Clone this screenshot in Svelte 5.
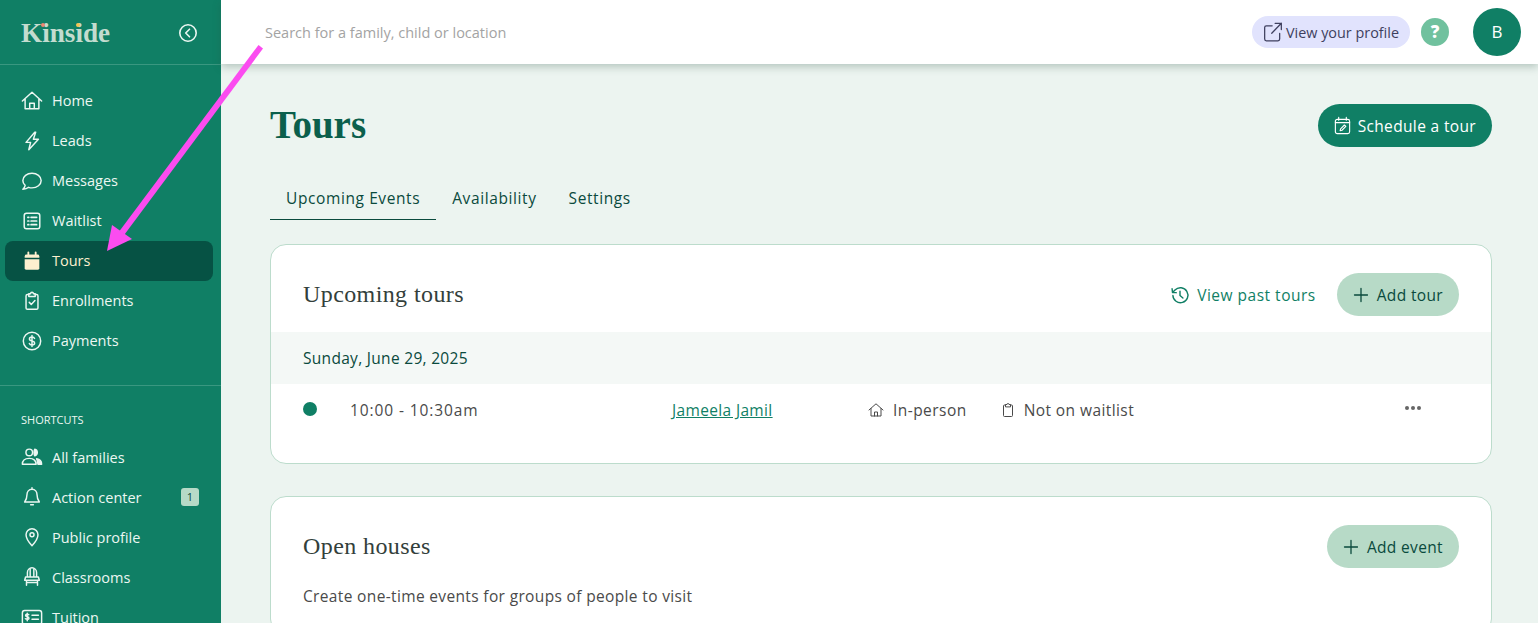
<script lang="ts">
  const mainNav = [
    { label: 'Home', icon: 'home' },
    { label: 'Leads', icon: 'bolt' },
    { label: 'Messages', icon: 'chat' },
    { label: 'Waitlist', icon: 'list' },
    { label: 'Tours', icon: 'calendar', active: true },
    { label: 'Enrollments', icon: 'clipboard' },
    { label: 'Payments', icon: 'dollar' }
  ];
  const shortcuts = [
    { label: 'All families', icon: 'people' },
    { label: 'Action center', icon: 'bell', badge: '1' },
    { label: 'Public profile', icon: 'pin' },
    { label: 'Classrooms', icon: 'chair' },
    { label: 'Tuition', icon: 'bill' }
  ];
</script>

{#snippet navIcon(name: string)}
  <svg class="nav-icon" viewBox="0 0 24 24" fill="none" stroke="currentColor" stroke-width="1.6" stroke-linecap="round" stroke-linejoin="round">
    {#if name === 'home'}
      <path d="M1.5 12 12 2.500 22.500 12M4.500 9.500v11h15v-11M9.500 20.500v-6h5v6" />
    {:else if name === 'bolt'}
      <path d="M15 2.500 5.500 13.500h5L8.500 21.500 19 10h-5.500l2.500-7.500Z" />
    {:else if name === 'chat'}
      <path d="M12 3.500c5.500 0 10 3.500 10 8s-4.500 8-10 8c-1.300 0-2.500-.2-3.700-.6C6.800 20.300 4.500 21 2 21c1.400-1.100 2.300-2.600 2.500-4.200C3 15.400 2 13.500 2 11.500c0-4.500 4.500-8 10-8Z" />
    {:else if name === 'list'}
      <rect x="3.500" y="3.500" width="17" height="17" rx="2.500" />
      <path d="M7.500 8h1M7.500 12h1M7.500 16h1M11 8h6M11 12h6M11 16h6" stroke-width="1.9" />
    {:else if name === 'calendar'}
      <path d="M4 8.500V7a2 2 0 0 1 2-2h12a2 2 0 0 1 2 2v1.500Z" fill="currentColor" stroke="none" />
      <path d="M4 10h16v10a1.500 1.500 0 0 1-1.500 1.500h-13A1.500 1.500 0 0 1 4 20Z" fill="currentColor" stroke="none" />
      <path d="M8 2.500V5M16 2.500V5" stroke-width="2" />
    {:else if name === 'clipboard'}
      <path d="M8.500 5H7a1.500 1.500 0 0 0-1.500 1.500v13A1.500 1.500 0 0 0 7 21h10a1.500 1.500 0 0 0 1.500-1.500v-13A1.500 1.500 0 0 0 17 5h-1.500" />
      <path d="M8.500 4h2a1.500 1.500 0 0 1 3 0h2v3h-7ZM9 13.500l2.200 2.200 4-4.200" />
    {:else if name === 'dollar'}
      <circle cx="12" cy="12" r="9.500" />
      <path d="M14.800 9.200c-.4-1-1.500-1.500-2.800-1.500-1.600 0-2.800.8-2.800 2.100 0 3 5.700 1.500 5.700 4.400 0 1.300-1.300 2.100-2.900 2.100-1.400 0-2.500-.6-2.900-1.600M12 6v12" />
    {:else if name === 'people'}
      <circle cx="9" cy="7" r="3.600" />
      <path d="M15 3.600a3.600 3.600 0 0 1 0 7c-1-1-1-6 0-7Z" fill="currentColor" />
      <path d="M1.500 20c0-4 3-6.500 7.500-6.500s7.500 2.500 7.500 6.500Z" />
      <path d="M17 14c3 .5 5.500 2.500 5.500 6h-4c0-2.500-.5-4.500-1.500-6Z" fill="currentColor" />
    {:else if name === 'bell'}
      <path d="M12 3.500c-3.500 0-5.500 2.800-5.500 6 0 4.500-1 6-2.500 8h16c-1.500-2-2.500-3.500-2.500-8 0-3.200-2-6-5.500-6ZM12 2v1.500M10.500 20.500h3" />
    {:else if name === 'pin'}
      <path d="M12 21.500S5.500 14.500 5.500 9.500a6.500 6.500 0 0 1 13 0c0 5-6.500 12-6.500 12Z" />
      <circle cx="12" cy="9.500" r="2.200" />
    {:else if name === 'chair'}
      <path d="M7 12V7a5 5 0 0 1 10 0v5M10 12V3.500M14 12V3.500M5 12h14l1 3.500H4ZM6 15.500V21M18 15.500V21M6 18h12" />
    {:else if name === 'bill'}
      <rect x="1.500" y="5" width="21" height="15" rx="2.500" />
      <path d="M8.500 9.500c-.5-.7-3.500-1-3.500.8 0 2 3.700 1 3.700 3 0 1.800-3.200 1.500-3.900.5M6.800 8v8M12 10h7M12 14.500h7" />
    {/if}
  </svg>
{/snippet}

<div class="app">
  <aside class="sidebar">
    <div class="brand">
      <span class="logo">Kinside<i class="dot red"></i><i class="dot yellow"></i></span>
      <svg class="collapse" viewBox="0 0 20 20" fill="none" stroke="currentColor" stroke-width="1.6" stroke-linecap="round" stroke-linejoin="round">
        <circle cx="10" cy="10" r="8.200" />
        <path d="M11.500 6.200 7.700 10l3.800 3.800" />
      </svg>
    </div>
    <nav class="nav">
      {#each mainNav as item (item.label)}
        <div class="nav-item" class:active={item.active}>
          {@render navIcon(item.icon)}
          <span class="raised">{item.label}</span>
        </div>
      {/each}
    </nav>
    <div class="section">
      <div class="section-label">SHORTCUTS</div>
      {#each shortcuts as item (item.label)}
        <div class="nav-item">
          {@render navIcon(item.icon)}
          <span>{item.label}</span>
          {#if item.badge}<b class="badge">{item.badge}</b>{/if}
        </div>
      {/each}
    </div>
  </aside>

  <div class="main">
    <header class="topbar">
      <span class="search">Search for a family, child or location</span>
      <div class="top-actions">
        <div class="profile-pill">
          <svg viewBox="0 0 24 24" fill="none" stroke="currentColor" stroke-width="1.5" stroke-linecap="round" stroke-linejoin="round">
            <path d="M11 4.500H4A2 2 0 0 0 2 6.500v14a2 2 0 0 0 2 2h14a2 2 0 0 0 2-2v-7M14.500 1.500H22v7.500M22 1.500 10.500 13.500" />
          </svg>
          View your profile
        </div>
        <div class="help">?</div>
        <div class="avatar">B</div>
      </div>
    </header>

    <main class="content">
      <div class="page-head">
        <h1>Tours</h1>
        <div class="btn primary">
          <svg viewBox="0 0 20 20" fill="none" stroke="currentColor" stroke-width="1.2" stroke-linecap="round" stroke-linejoin="round">
            <rect x="2.500" y="3.500" width="15" height="15" rx="2" />
            <path d="M2.500 7h15M6 1.500v3M14 1.500v3M7.500 15.500l.5-2 4-4 1.500 1.500-4 4Z" />
          </svg>
          Schedule a tour
        </div>
      </div>

      <div class="tabs">
        <span class="tab selected">Upcoming Events</span>
        <span class="tab">Availability</span>
        <span class="tab">Settings</span>
      </div>

      <section class="card">
        <div class="card-head">
          <h2>Upcoming tours</h2>
          <div class="card-actions">
            <span class="past-link">
              <svg viewBox="0 0 24 24" fill="none" stroke="currentColor" stroke-width="1.7" stroke-linecap="round" stroke-linejoin="round">
                <path d="M3.500 12.500A9 9 0 1 0 6 6L3 9M2.500 4.500 3 9l4.500.2M12 7.500V12.500l3.500 3" />
              </svg>
              View past tours
            </span>
            <div class="btn light">
              <svg viewBox="0 0 16 16" fill="none" stroke="currentColor" stroke-width="1.3" stroke-linecap="round"><path d="M8 1.500v13M1.500 8h13" /></svg>
              Add tour
            </div>
          </div>
        </div>
        <div class="date-row">Sunday, June 29, 2025</div>
        <div class="tour-row">
          <i class="status"></i>
          <span class="time">10:00 - 10:30am</span>
          <a class="name" href="#top">Jameela Jamil</a>
          <span class="meta in-person">
            <svg viewBox="0 0 16 16" fill="none" stroke="currentColor" stroke-width="1" stroke-linecap="round" stroke-linejoin="round"><path d="M1 8 8 1.800 15 8M3 6.500v7.500h10V6.500M6.500 14v-4h3v4" /></svg>
            In-person
          </span>
          <span class="meta waitlist">
            <svg viewBox="0 0 16 16" fill="none" stroke="currentColor" stroke-width="1" stroke-linecap="round" stroke-linejoin="round"><path d="M5.500 3H4.500A1 1 0 0 0 3.500 4v9.500a1 1 0 0 0 1 1h7a1 1 0 0 0 1-1V4a1 1 0 0 0-1-1h-1M5.500 4.500V2.500h1.500a1 1 0 0 1 2 0h1.500v2Z" /></svg>
            Not on waitlist
          </span>
          <span class="more"><i></i><i></i><i></i></span>
        </div>
      </section>

      <section class="card second">
        <div class="card-head">
          <h2>Open houses</h2>
          <div class="btn light">
            <svg viewBox="0 0 16 16" fill="none" stroke="currentColor" stroke-width="1.3" stroke-linecap="round"><path d="M8 1.500v13M1.500 8h13" /></svg>
            Add event
          </div>
        </div>
        <p class="note">Create one-time events for groups of people to visit</p>
      </section>
    </main>
  </div>

  <!-- annotation drawn over the page -->
  <svg class="arrow" viewBox="0 0 300 300" fill="#fb4cf0">
    <path d="M258.500 45 263 48.500 124.500 234.500 119.500 231Z" />
    <path d="M112 225 132 239 107 251Z" />
  </svg>
</div>

<style>
  :global(body) {
    margin: 0;
    background: #ecf4f0;
    font-family: 'Open Sans', sans-serif;
  }
  .app {
    position: relative;
    display: flex;
    height: 623px;
    overflow: hidden;
  }
  .sidebar {
    flex: 0 0 221px;
    background: #107f65;
    color: #ecf7f2;
    overflow: hidden;
  }
  .brand {
    display: flex;
    align-items: center;
    justify-content: space-between;
    height: 65px;
    padding: 2px 23px 0 21px;
    box-sizing: border-box;
    border-bottom: 1px solid #3a9780;
  }
  .logo {
    position: relative;
    font-family: 'Liberation Serif', serif;
    font-weight: 700;
    font-size: 27.2px;
    color: #c3dccf;
  }
  .dot {
    position: absolute;
    top: 5px;
    width: 4px;
    height: 4px;
    border-radius: 50%;
  }
  .dot.red { left: 20px; background: #ee8772; }
  .dot.yellow { left: 55px; background: #f5c451; }
  .collapse { width: 20px; height: 20px; }
  .nav {
    display: flex;
    flex-direction: column;
    padding: 16px 8px 24px 5px;
    border-bottom: 1px solid #3a9780;
  }
  .nav-item {
    display: flex;
    align-items: center;
    gap: 9px;
    height: 40px;
    padding-left: 16px;
    border-radius: 8px;
    font-size: 14.5px;
  }
  .nav-item.active {
    background: #065244;
    color: #fdf0cf;
  }
  .raised { padding-bottom: 2px; }
  .nav-icon { flex: none; width: 22px; height: 22px; }
  .section { padding: 25px 8px 0 5px; }
  .section-label {
    padding-left: 16px;
    margin-bottom: 9px;
    font-size: 11px;
    line-height: 17px;
  }
  .badge {
    margin-left: auto;
    margin-right: 14px;
    width: 18px;
    height: 18px;
    border-radius: 3px;
    background: #b7dac7;
    color: #0a4a3d;
    font-size: 11px;
    font-weight: 400;
    line-height: 18px;
    text-align: center;
  }
  .main { flex: 1; min-width: 0; }
  .topbar {
    display: flex;
    align-items: center;
    justify-content: space-between;
    height: 64px;
    padding: 0 17px 0 44px;
    background: #fff;
    box-shadow: 0 3px 8px rgba(40, 80, 65, 0.28);
  }
  .search { font-size: 14.5px; color: #a3a3a3; }
  .top-actions { display: flex; align-items: center; }
  .profile-pill {
    display: flex;
    align-items: center;
    gap: 3px;
    height: 32px;
    padding: 0 11px;
    border-radius: 16px;
    background: #e1e3fd;
    color: #3e3f5e;
    font-size: 14.4px;
  }
  .profile-pill svg { width: 20px; height: 20px; }
  .help {
    width: 28px;
    height: 28px;
    margin: 0 24px 0 11px;
    border-radius: 50%;
    background: #70c19e;
    color: #fff;
    font-weight: 800;
    font-size: 17px;
    line-height: 28px;
    text-align: center;
  }
  .avatar {
    width: 48px;
    height: 48px;
    border-radius: 50%;
    background: #107f65;
    color: #fff;
    font-size: 17px;
    line-height: 48px;
    text-align: center;
  }
  .content {
    padding: 0 46px 0 49px;
    font-size: 15.5px;
    letter-spacing: 0.35px;
  }
  .page-head {
    display: flex;
    align-items: center;
    justify-content: space-between;
    padding-top: 40px;
  }
  h1 {
    margin: -2px 0 0;
    font-family: 'Liberation Serif', serif;
    font-weight: 700;
    font-size: 39px;
    line-height: 43px;
    letter-spacing: 0;
    color: #0b5f4c;
  }
  .btn {
    display: flex;
    align-items: center;
    height: 43px;
    border-radius: 22px;
  }
  .btn.primary {
    gap: 6px;
    padding: 0 16px 0 15px;
    background: #107f65;
    color: #fff;
  }
  .btn.primary svg { width: 19px; height: 19px; }
  .btn.light {
    gap: 8px;
    padding: 0 16px;
    background: #b7dac7;
    color: #0a4a3d;
  }
  .btn.light svg { width: 16px; height: 16px; }
  .tabs {
    display: flex;
    margin-top: 29px;
  }
  .tab {
    padding: 0 16px;
    height: 44px;
    box-sizing: border-box;
    line-height: 44px;
    letter-spacing: 0.6px;
    color: #0a4a3d;
  }
  .tab.selected { border-bottom: 1px solid #0a4a3d; }
  .card {
    margin-top: 24px;
    padding-bottom: 27px;
    background: #fff;
    border: 1px solid #bcdccc;
    border-radius: 16px;
    overflow: hidden;
  }
  .card.second { margin-top: 32px; }
  .card-head {
    display: flex;
    align-items: center;
    justify-content: space-between;
    padding: 28px 32px 16px;
  }
  .card.second .card-head { padding-bottom: 17px; }
  h2 {
    margin: 0;
    font-family: 'Liberation Serif', serif;
    font-weight: 400;
    font-size: 24px;
    letter-spacing: 0.4px;
    color: #33403b;
  }
  .card-actions { display: flex; align-items: center; gap: 21px; }
  .past-link {
    display: flex;
    align-items: center;
    gap: 7px;
    color: #107f65;
    letter-spacing: 0.5px;
  }
  .past-link svg { width: 20px; height: 20px; }
  .date-row {
    height: 52px;
    padding-left: 32px;
    background: #f4f8f6;
    color: #0a4a3d;
    line-height: 52px;
    letter-spacing: 0.3px;
  }
  .tour-row {
    display: flex;
    align-items: center;
    height: 52px;
    padding-left: 32px;
    color: #4a4a4a;
  }
  .status {
    flex: none;
    width: 14px;
    height: 14px;
    margin-top: -3px;
    border-radius: 50%;
    background: #107f65;
  }
  .time { margin-left: 33px; width: 322px; letter-spacing: 0.9px; }
  .name { width: 196px; color: #107f65; }
  .meta { display: flex; align-items: center; gap: 9px; }
  .meta svg { width: 16px; height: 16px; }
  .in-person { letter-spacing: 0.45px; }
  .waitlist { margin-left: 33px; gap: 8px; letter-spacing: 0.42px; }
  .more {
    display: flex;
    gap: 2px;
    margin-left: auto;
    margin-right: 70px;
    margin-top: -4px;
  }
  .more i {
    width: 4px;
    height: 4px;
    border-radius: 50%;
    background: #666;
  }
  .note {
    margin: 0 32px;
    color: #4a4a4a;
  }
  .arrow {
    position: absolute;
    left: 0;
    top: 0;
    width: 300px;
    height: 300px;
    overflow: visible;
  }
</style>
